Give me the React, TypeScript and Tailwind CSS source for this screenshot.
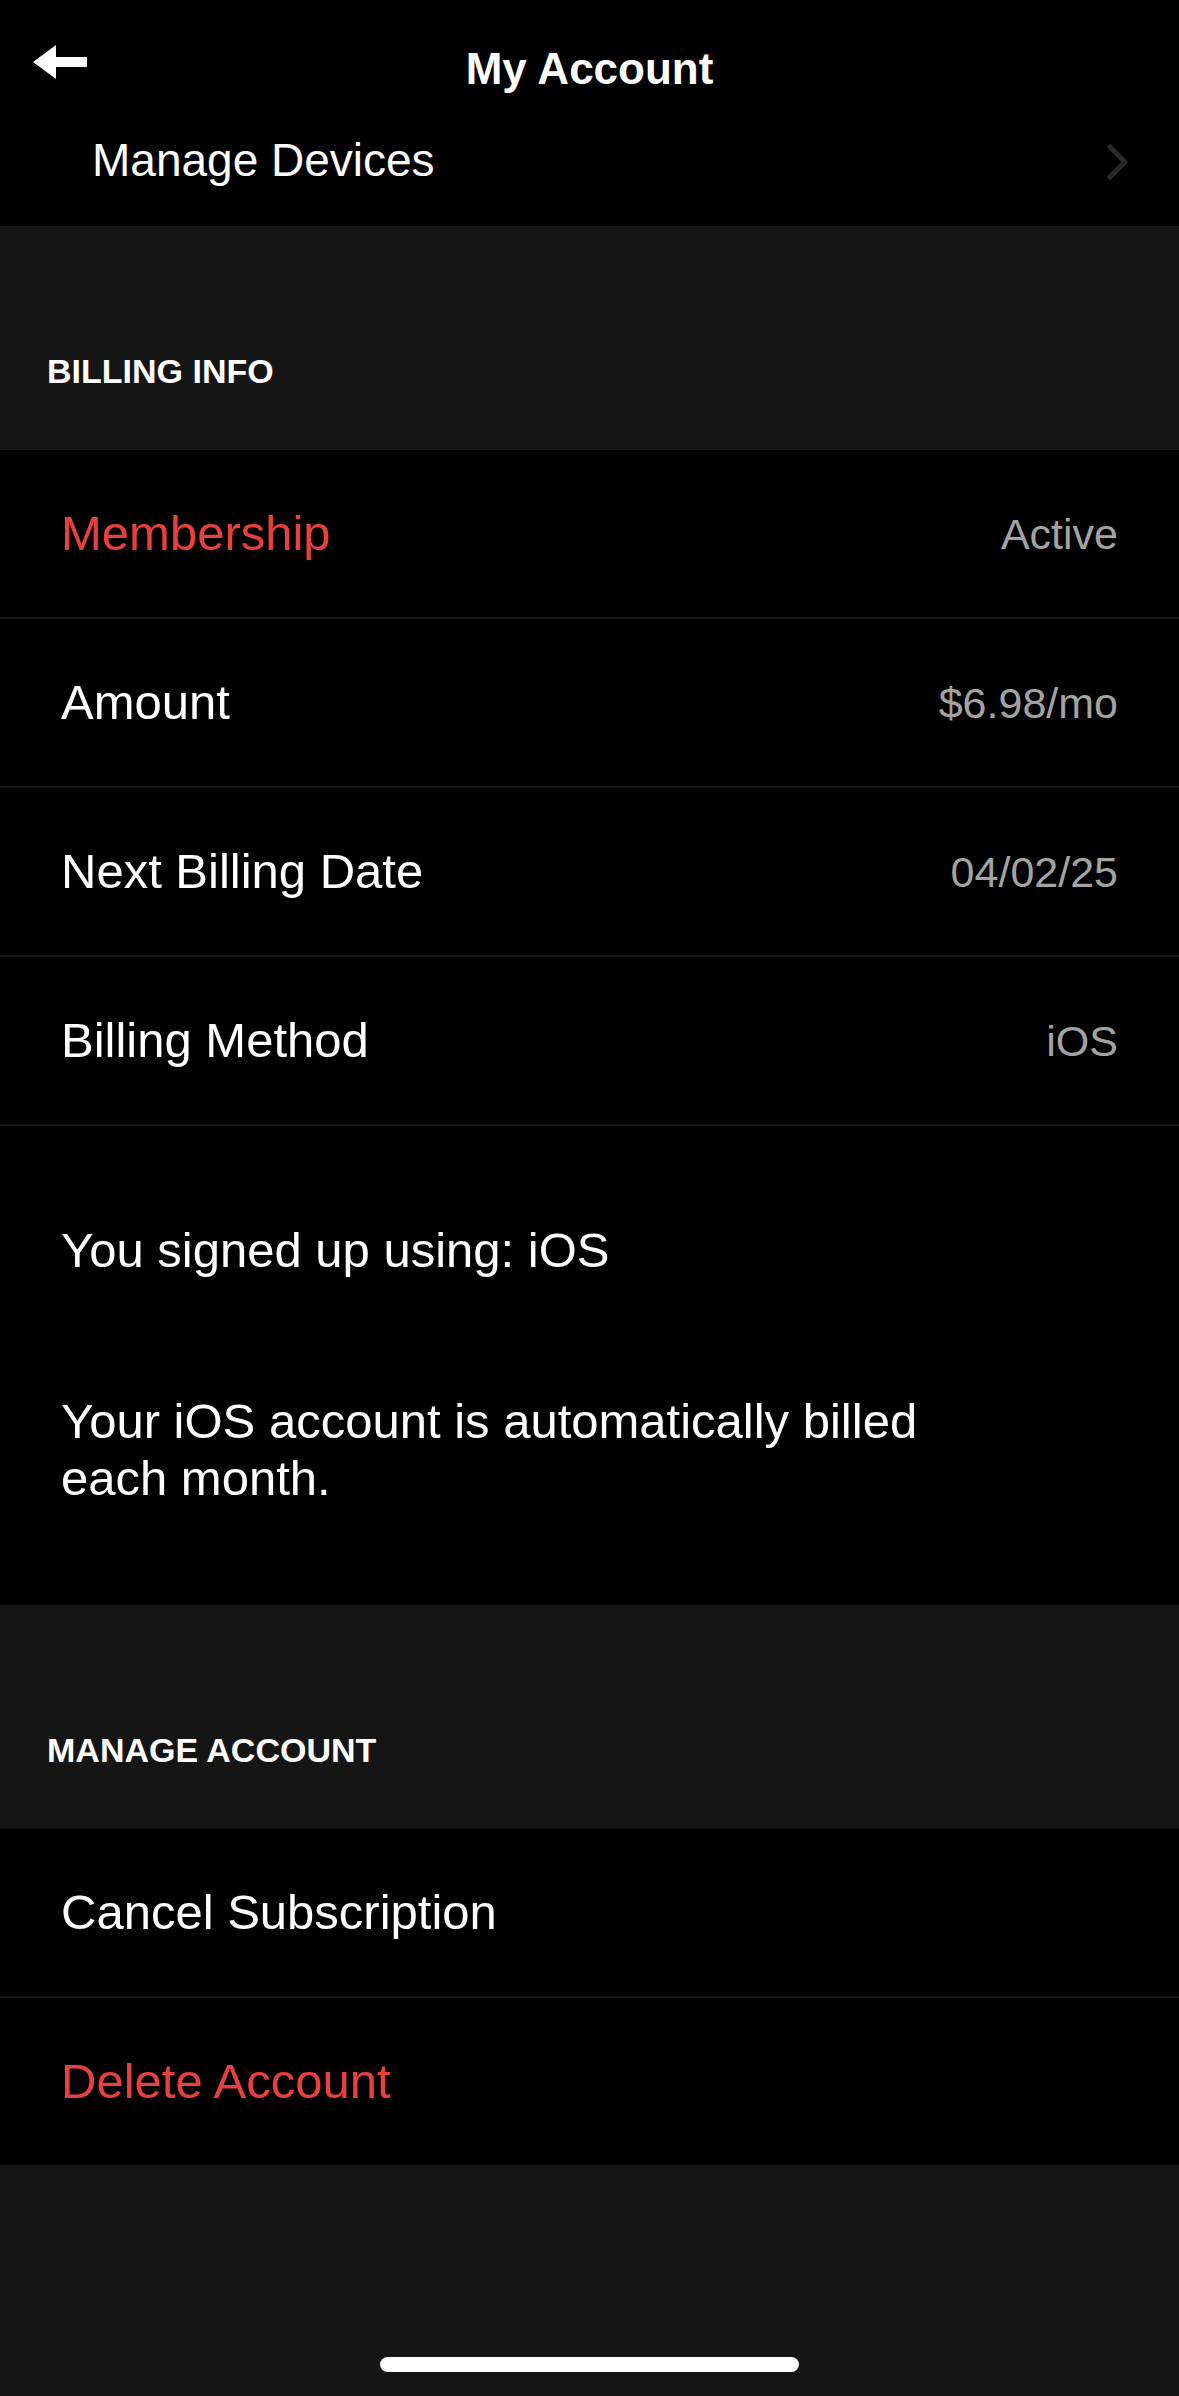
import React from 'react';

interface InfoRow {
  label: string;
  value: string;
  accent?: boolean;
}

const billingRows: InfoRow[] = [
  { label: 'Membership', value: 'Active', accent: true },
  { label: 'Amount', value: '$6.98/mo' },
  { label: 'Next Billing Date', value: '04/02/25' },
  { label: 'Billing Method', value: 'iOS' },
];

const font = { fontFamily: "'Liberation Sans', Arial, sans-serif" };

function BackArrow() {
  return (
    <svg width="56" height="34" viewBox="0 0 56 34" className="block">
      <path d="M0 17 L23 0 L23 12 L54 12 L54 22 L23 22 L23 34 Z" fill="#ffffff" />
    </svg>
  );
}

function Chevron() {
  return (
    <svg width="22" height="36" viewBox="0 0 22 36" className="block">
      <path d="M3 3 L18 18 L3 33" fill="none" stroke="#2a2a2a" strokeWidth="5" strokeLinecap="round" strokeLinejoin="round" />
    </svg>
  );
}

function SectionHeader({ title }: { title: string }) {
  return (
    <div className="h-[224px] bg-[#151515] flex items-end pb-[59px] pl-[47px]">
      <span className="text-[34px] leading-[40px] font-bold text-white">{title}</span>
    </div>
  );
}

function Row({ label, value, accent }: InfoRow) {
  return (
    <div className="h-[169px] bg-black border-b-2 border-[#151515] flex items-center justify-between pl-[61px] pr-[61px]">
      <span className={`text-[49px] leading-[57px] ${accent ? 'text-[#e8403f]' : 'text-white'}`}>{label}</span>
      {value && <span className="text-[43px] leading-[50px] text-[#a3a3a3]">{value}</span>}
    </div>
  );
}

export default function App() {
  return (
    <div className="w-full h-[2396px] bg-[#151515] flex flex-col" style={font}>
      {/* top bar */}
      <div className="bg-black">
        <div className="relative h-[138px] flex items-center justify-center">
          <button className="absolute left-[33px] top-[45px]">
            <BackArrow />
          </button>
          <span className="text-[44px] font-bold text-white leading-[52px]">My Account</span>
        </div>
        <div className="h-[88px] flex items-start justify-between pl-[92px] pr-[50px]">
          <span className="text-[46px] leading-[44px] text-white">Manage Devices</span>
          <div className="pt-[6px]">
            <Chevron />
          </div>
        </div>
      </div>

      <SectionHeader title="BILLING INFO" />
      {billingRows.map((r) => (
        <Row key={r.label} {...r} />
      ))}

      <div className="bg-black pt-[96px] pb-[98px] pl-[61px] flex flex-col gap-[114px]">
        <p className="text-[49px] leading-[57px] text-white">You signed up using: iOS</p>
        <p className="text-[49px] leading-[57px] text-white max-w-[940px]">
          Your iOS account is automatically billed each month.
        </p>
      </div>

      <SectionHeader title="MANAGE ACCOUNT" />
      <Row label="Cancel Subscription" value="" />
      <Row label="Delete Account" value="" accent />

      <div className="flex-1 flex items-end justify-center pb-[24px]">
        <div className="w-[419px] h-[15px] rounded-full bg-white" />
      </div>
    </div>
  );
}
